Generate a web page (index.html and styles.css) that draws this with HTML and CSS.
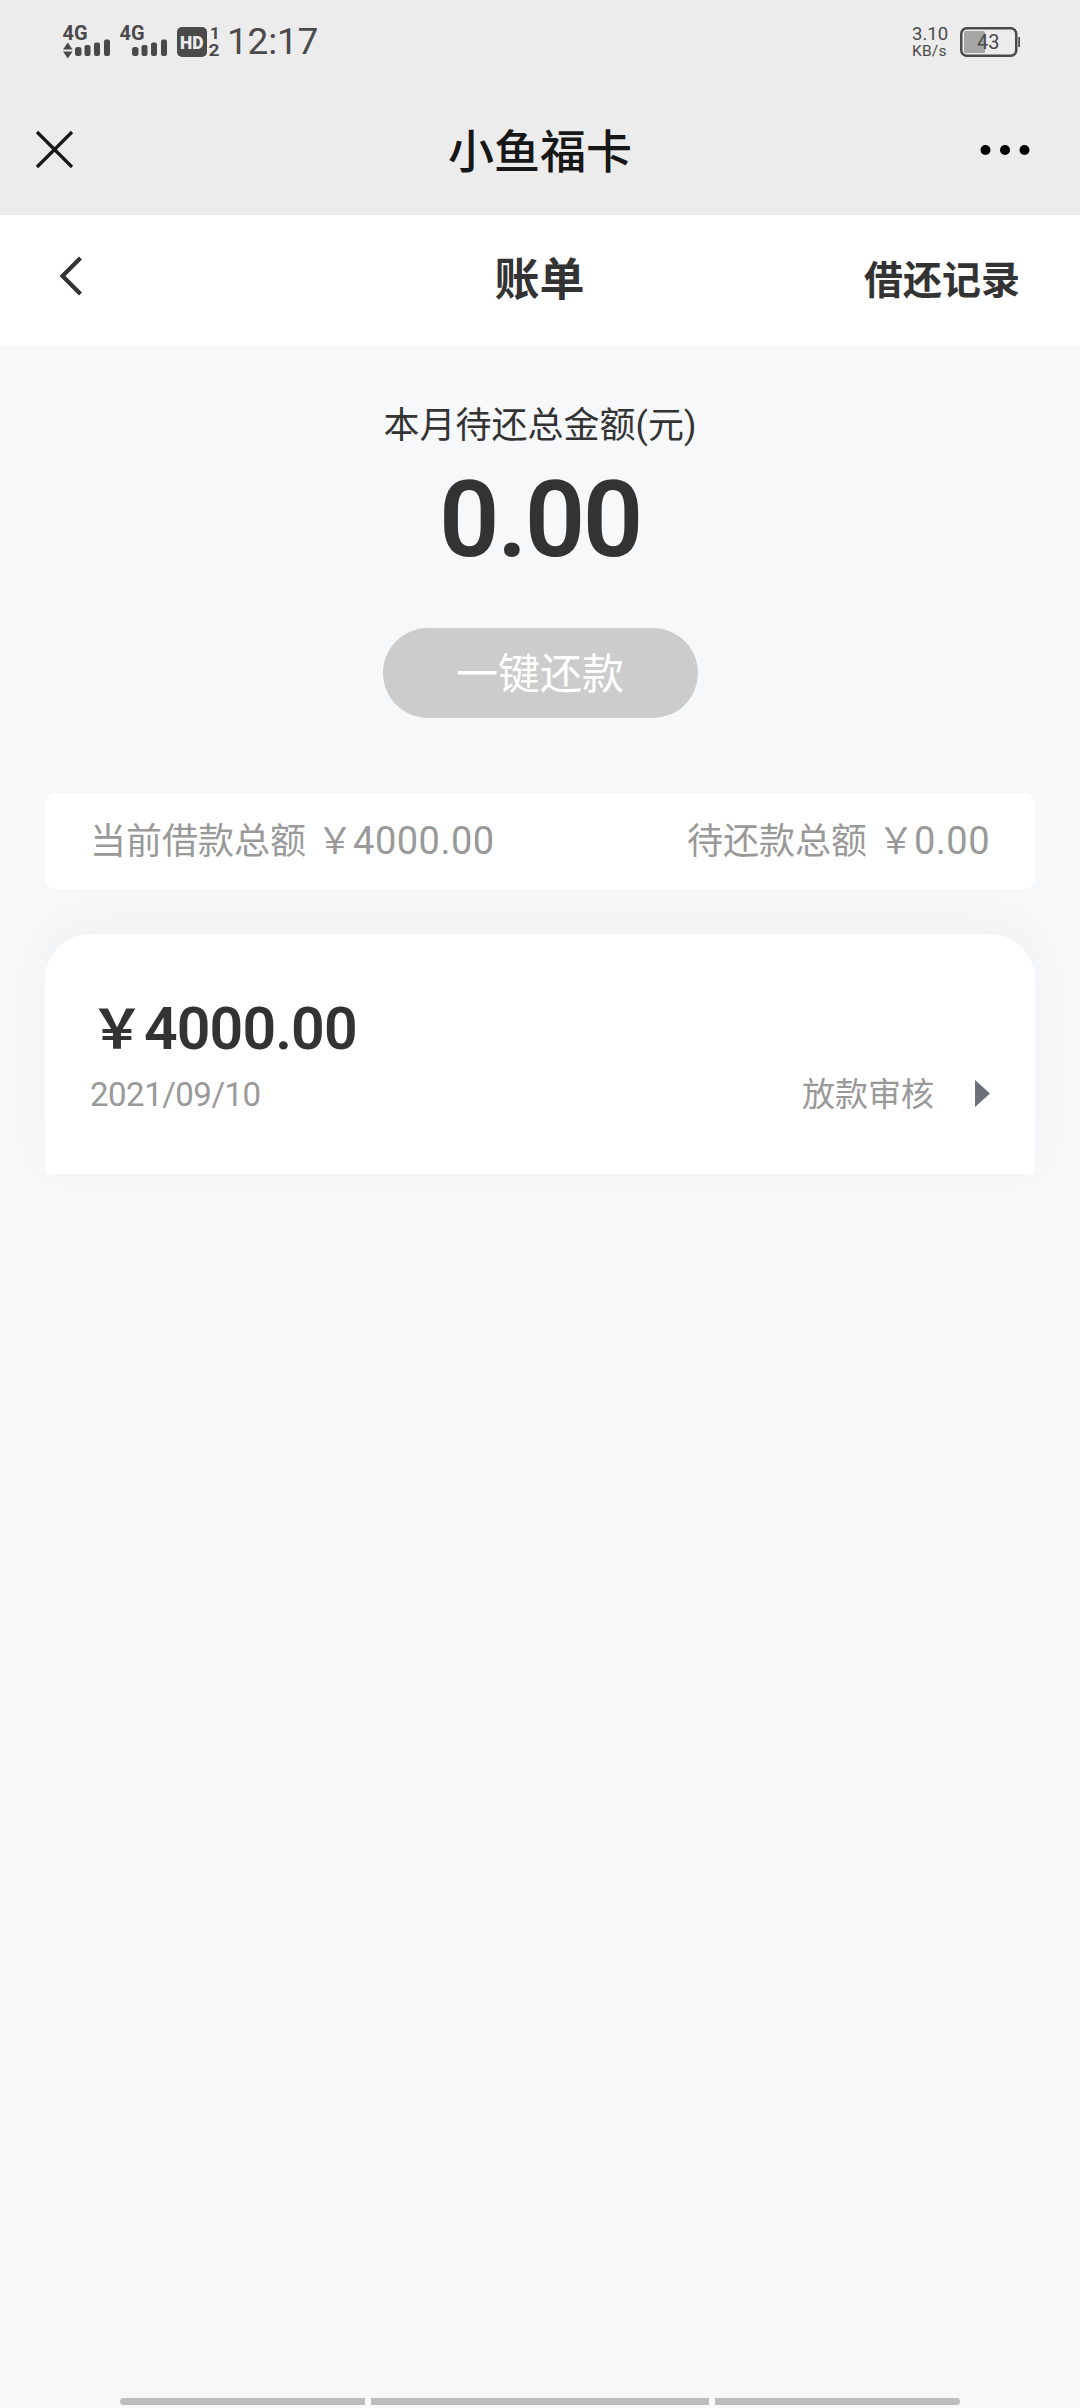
FILE: index.html
```html
<!DOCTYPE html>
<html lang="zh-CN">
<head>
<meta charset="utf-8">
<title>账单</title>
<link rel="stylesheet" href="styles.css">
</head>
<body>
<div class="app">
  <div class="status">
    <svg class="signals" width="160" height="40" viewBox="60 22 160 40">
      <g class="ink">
        <text x="62.5" y="39.5" class="net" textLength="25" lengthAdjust="spacingAndGlyphs">4G</text>
        <path d="M63 49.5l4.8-7 4.8 7zM63 51.5h9.6l-4.8 7z"/>
        <rect x="75" y="47" width="6.5" height="9" rx="2.5"/><rect x="84.5" y="45" width="6" height="11" rx="2"/><rect x="94" y="42.5" width="6" height="13.5" rx="2"/><rect x="104" y="39.5" width="6" height="16.5" rx="2"/>
        <text x="119.5" y="39.5" class="net" textLength="25" lengthAdjust="spacingAndGlyphs">4G</text>
        <rect x="132" y="47" width="6.5" height="9" rx="2.5"/><rect x="141.5" y="45" width="6" height="11" rx="2"/><rect x="151" y="42.5" width="6" height="13.5" rx="2"/><rect x="161" y="39.5" width="6" height="16.5" rx="2"/>
        <rect x="177" y="27" width="30" height="30" rx="5"/>
        <text x="180" y="49" class="hd" textLength="23.5" lengthAdjust="spacingAndGlyphs">HD</text>
        <text x="210" y="39" class="sim">1</text>
        <text x="208.5" y="56" class="sim" textLength="11" lengthAdjust="spacingAndGlyphs">2</text>
      </g>
    </svg>
    <span class="clock">12:17</span>
    <span class="speed"><span class="rate">3.10</span><span class="unit">KB/s</span></span>
    <svg class="battery" width="60" height="32" viewBox="0 0 60 32">
      <rect x="1.25" y="2.25" width="55" height="27.5" rx="5.5" fill="none" stroke="#4a4a4a" stroke-width="2.5"/>
      <rect x="4" y="5" width="21" height="22" rx="1.5" fill="#a6a6a6"/>
      <path d="M58.300 11h1.700v10h-1.700z" fill="#4a4a4a"/>
      <text x="17" y="23" class="pct" textLength="22.5">43</text>
    </svg>
  </div>
  <div class="titlebar">
    <svg width="40" height="40" viewBox="0 0 40 40"><path d="M2 2L37 37M37 2L2 37" fill="none" stroke="#171717" stroke-width="3.2"/></svg>
    <h1 class="app-name">小鱼福卡</h1>
    <svg width="50" height="12" viewBox="0 0 50 12"><circle cx="5.5" cy="6" r="5"/><circle cx="25" cy="6" r="5"/><circle cx="44.5" cy="6" r="5"/></svg>
  </div>
  <div class="navbar">
    <svg class="back" width="24" height="42" viewBox="0 0 24 42"><path d="M21.500 3L3.500 21L21.500 39" fill="none" stroke="#333" stroke-width="4.2"/></svg>
    <h2 class="page-name">账单</h2>
    <span class="history">借还记录</span>
  </div>
  <main class="content">
    <p class="label">本月待还总金额(元)</p>
    <p class="due">0.00</p>
    <button class="repay" disabled>一键还款</button>
    <section class="totals">
      <span>当前借款总额<span class="yen">￥</span><span class="num">4000.00</span></span>
      <span>待还款总额<span class="yen">￥</span><span class="num">0.00</span></span>
    </section>
    <section class="bill">
      <p class="amount">￥<span class="amount-num">4000.00</span></p>
      <div class="detail">
        <span class="date">2021/09/10</span>
        <span class="state">放款审核</span>
        <svg class="more" width="15" height="27" viewBox="0 0 15 27"><path d="M0 0L15 13.500L0 27z" fill="#6b6f78"/></svg>
      </div>
    </section>
  </main>
  <div class="homebar"><i class="side left"></i><i class="middle"></i><i class="side right"></i></div>
</div>
</body>
</html>
```
FILE: styles.css
```css
* { box-sizing: border-box; margin: 0; padding: 0; }
body { background: #f7f8fa; color: #333; font-family: Roboto, "Noto Sans CJK SC", sans-serif; }
.app { width: 1080px; height: 2408px; display: flex; flex-direction: column; }
.status { height: 84px; background: #ececec; display: flex; align-items: center; padding: 0 60px; color: #4a4a4a; }
.signals { flex: none; }
.ink { fill: #4a4a4a; }
.net { font: 700 20px Roboto, sans-serif; }
.hd { font: 900 18px Roboto, sans-serif; fill: #ececec; }
.sim { font: 700 17px Roboto, sans-serif; }
.clock { margin-left: 7px; font-size: 37px; line-height: 40px; letter-spacing: -0.2px; }
.speed { margin-left: auto; width: 37px; display: flex; flex-direction: column; }
.rate { font-size: 18.5px; line-height: 19px; }
.unit { font-size: 15.5px; line-height: 15px; letter-spacing: 0.2px; }
.battery { margin-left: 11px; }
.pct { font: 20px Roboto, sans-serif; fill: #4a4a4a; }
.titlebar { height: 131px; background: #ececec; display: flex; align-items: center; justify-content: space-between; padding: 0 50px 0 35px; }
.app-name { font-size: 46px; font-weight: 500; line-height: 60px; color: #171717; padding: 5px 0 0 25px; }
.navbar { height: 131px; background: #fff; display: grid; grid-template-columns: 1fr auto 1fr; align-items: center; padding: 0 60px 0 59px; }
.back { margin-top: -9px; }
.page-name { font-size: 45px; font-weight: 700; line-height: 60px; }
.history { justify-self: end; font-size: 39px; font-weight: 700; line-height: 60px; }
.content { flex: 1; padding: 56px 45px 0; display: flex; flex-direction: column; }
.label { text-align: center; font-size: 36px; line-height: 48px; }
.due { text-align: center; font-size: 106px; line-height: 130px; padding-top: 5px; font-weight: 600; letter-spacing: -2.5px; margin-bottom: 43px; }
.repay { align-self: center; width: 315px; height: 90px; border: 0; border-radius: 45px; background: #ccc; color: #fff; font: 42px/84px "Noto Sans CJK SC", sans-serif; padding-bottom: 4px; }
.totals { margin-top: 75px; height: 96px; padding: 0 45px; border-radius: 12px; background: #fff; color: #999; display: flex; justify-content: space-between; align-items: center; font-size: 36px; line-height: 48px; }
.yen { margin-left: 11px; }
.num { font-size: 38px; letter-spacing: 0.5px; }
.bill { margin-top: 45px; height: 240px; padding: 60px 45px 0; border-radius: 45px 45px 0 0; background: #fff; box-shadow: 0 -10px 45px rgba(0, 0, 0, 0.035); }
.amount { font-size: 54px; line-height: 70px; font-weight: 600; }
.amount-num { font-size: 59px; letter-spacing: -0.9px; }
.detail { display: flex; align-items: center; height: 56px; color: #999; font-size: 33px; line-height: 48px; }
.date { letter-spacing: -0.5px; padding-top: 1px; }
.state { margin-left: auto; padding-top: 1px; }
.more { margin: -2px 0 0 41px; }
.homebar { height: 10px; display: flex; align-self: center; gap: 6px; width: 840px; }
.homebar i { height: 7px; background: #bbbcbe; }
.side { width: 245px; }
.middle { flex: 1; }
.left { border-radius: 4px 0 0 4px; }
.right { border-radius: 0 4px 4px 0; }
```
